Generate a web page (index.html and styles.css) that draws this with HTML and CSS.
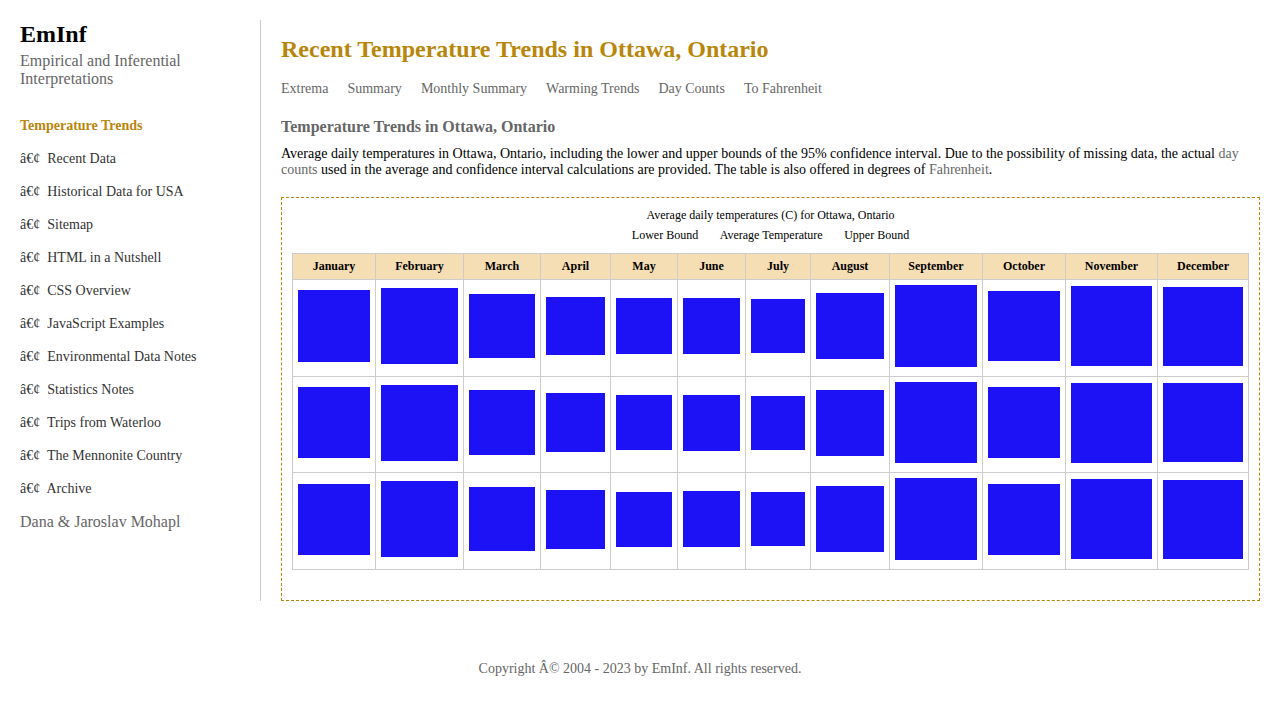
FILE: index.html
```html
<!DOCTYPE html>
<html lang="en">
  <head>
    <meta charset="UTF-8" />
    <meta name="viewport" content="width=device-width, initial-scale=1.0" />
    <title>Recent Temperature Trends in Ottawa, Ontario</title>
    <link rel="stylesheet" href="styles.css">
  </head>
  <body>
    <div class="page">
      <aside class="sidebar">
        <h1 class="site-name">EmInf</h1>
        <p class="tagline">Empirical and Inferential Interpretations</p>
        <ul class="side-nav">
          <li class="current">Temperature Trends</li>
          <li>â€¢&nbsp; Recent Data</li>
          <li>â€¢&nbsp; Historical Data for USA</li>
          <li>â€¢&nbsp; Sitemap</li>
          <li>â€¢&nbsp; HTML in a Nutshell</li>
          <li>â€¢&nbsp; CSS Overview</li>
          <li>â€¢&nbsp; JavaScript Examples</li>
          <li>â€¢&nbsp; Environmental Data Notes</li>
          <li>â€¢&nbsp; Statistics Notes</li>
          <li>â€¢&nbsp; Trips from Waterloo</li>
          <li>â€¢&nbsp; The Mennonite Country</li>
          <li>â€¢&nbsp; Archive</li>
        </ul>
        <p class="authors">Dana &amp; Jaroslav Mohapl</p>
      </aside>

      <main class="content">
        <h2 class="page-title">Recent Temperature Trends in Ottawa, Ontario</h2>
        <nav class="top-nav">
          <a href="#">Extrema</a>
          <a href="#">Summary</a>
          <a href="#">Monthly Summary</a>
          <a href="#">Warming Trends</a>
          <a href="#">Day Counts</a>
          <a href="#">To Fahrenheit</a>
        </nav>
        <h3 class="section-title">Temperature Trends in Ottawa, Ontario</h3>
        <p class="intro">
          Average daily temperatures in Ottawa, Ontario, including the lower and upper bounds of the 95% confidence interval. Due to the possibility of missing data, the actual <a href="#">day counts</a> used in the average and confidence interval calculations are provided. The table is also offered in degrees of <a href="#">Fahrenheit</a>.
        </p>

        <div class="chart-box">
          <p class="chart-caption">Average daily temperatures (C) for Ottawa, Ontario</p>
          <div class="legend">
            <span>Lower Bound</span>
            <span>Average Temperature</span>
            <span>Upper Bound</span>
          </div>
          <table class="temp-table">
            <thead>
              <tr>
                <th>January</th>
                <th>February</th>
                <th>March</th>
                <th>April</th>
                <th>May</th>
                <th>June</th>
                <th>July</th>
                <th>August</th>
                <th>September</th>
                <th>October</th>
                <th>November</th>
                <th>December</th>
              </tr>
            </thead>
            <tbody id="tempBody">
              <!-- rows are built by the script below -->
            </tbody>
          </table>
        </div>
      </main>
    </div>

    <footer class="footer">Copyright Â© 2004 - 2023 by EmInf. All rights reserved.</footer>

    <script>
      // box sizes per month: one width per column, heights per row
      const widths = [72, 77, 66, 59, 56, 57, 54, 68, 82, 72, 81, 80];
      const heights = [
        [72, 76, 64, 58, 56, 56, 54, 66, 82, 70, 80, 79],
        [71, 76, 65, 59, 55, 56, 54, 66, 81, 71, 80, 79],
        [71, 76, 64, 59, 55, 56, 54, 66, 82, 71, 80, 79]
      ];

      const tbody = document.getElementById("tempBody");
      heights.forEach(function (row) {
        const tr = document.createElement("tr");
        row.forEach(function (h, i) {
          const td = document.createElement("td");
          td.innerHTML =
            '<div class="temp-box" style="width:' + widths[i] + 'px;height:' + h + 'px"></div>';
          tr.appendChild(td);
        });
        tbody.appendChild(tr);
      });
    </script>
  </body>
</html>
```

FILE: styles.css
```css
/* styles.css */
body {
  font-family: "Liberation Serif", "Times New Roman", serif;
  margin: 0;
  padding: 20px;
  color: #000;
  background: #fff;
}

a {
  color: #666;
  text-decoration: none;
}

.page {
  display: flex;
}

/* sidebar */
.sidebar {
  width: 240px;
  flex-shrink: 0;
  border-right: 1px solid #ccc;
}

.site-name {
  margin: 0;
  font-size: 24px;
  line-height: 28px;
  font-weight: bold;
}

.tagline {
  margin: 4px 0 0;
  font-size: 16px;
  line-height: 18px;
  color: #666;
}

.side-nav {
  list-style: none;
  margin: 21px 0 0;
  padding: 0;
}

.side-nav li {
  font-size: 14px;
  line-height: 33px;
  color: #333;
}

.side-nav .current {
  color: #b8860b;
  font-weight: bold;
}

.authors {
  margin: 8px 0 0;
  font-size: 16px;
  line-height: 18px;
  color: #666;
}

/* main content */
.content {
  flex: 1;
  padding-left: 20px;
}

.page-title {
  margin: 15px 0 0;
  font-size: 24px;
  line-height: 28px;
  color: #b8860b;
}

.top-nav {
  display: flex;
  gap: 19px;
  margin-top: 18px;
  font-size: 14px;
  line-height: 16px;
}

.section-title {
  margin: 21px 0 0;
  font-size: 16px;
  line-height: 18px;
  color: #666;
}

.intro {
  margin: 10px 0 0;
  font-size: 14px;
  line-height: 16px;
}

.chart-box {
  margin-top: 19px;
  padding: 10px 10px 30px;
  border: 1px dashed #b8860b;
}

.chart-caption {
  margin: 0;
  font-size: 12px;
  line-height: 14px;
  text-align: center;
}

.legend {
  display: flex;
  justify-content: center;
  gap: 21.5px;
  margin: 6px 0 11px;
  font-size: 12px;
  line-height: 14px;
}

.temp-table {
  width: 100%;
  border-collapse: collapse;
}

.temp-table th {
  background: #f5deb3;
  font-size: 12px;
  line-height: 15px;
  padding: 5px;
  border: 1px solid #ccc;
  text-align: center;
}

.temp-table td {
  padding: 5px 5px 9px;
  border: 1px solid #ccc;
  vertical-align: middle;
}

.temp-box {
  margin: 0 auto;
  background: #1d11f5;
}

.footer {
  margin-top: 60px;
  text-align: center;
  font-size: 14px;
  line-height: 16px;
  color: #666;
}
```
